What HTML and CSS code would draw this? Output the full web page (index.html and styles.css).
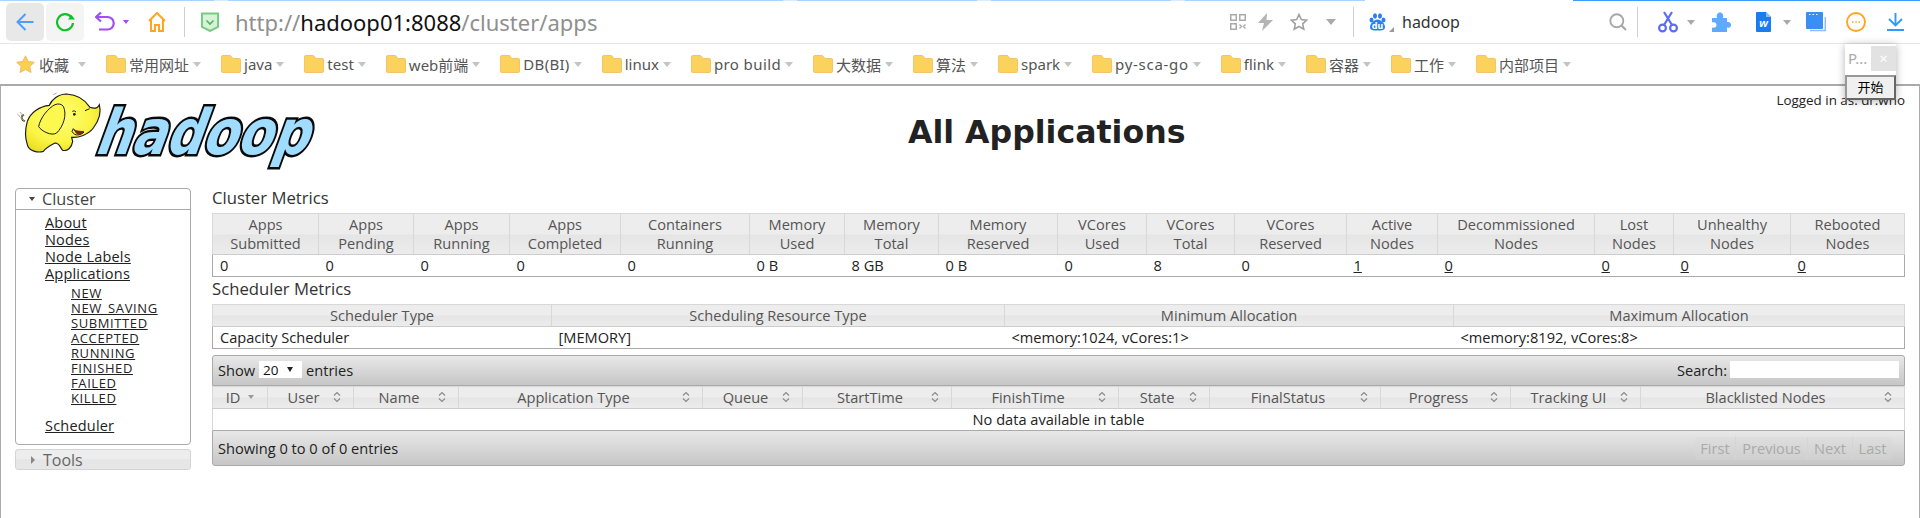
FILE: index.html
```html
<!DOCTYPE html>
<html lang="en">
<head>
<meta charset="utf-8">
<title>All Applications</title>
<link rel="stylesheet" href="styles.css">
</head>
<body>
<svg class="defs" width="0" height="0" aria-hidden="true">
  <symbol id="folder" viewBox="0 0 20 18"><path d="M.5 1.5Q.5.5 1.5.5H9.5L12 3.5H18.5Q19.5 3.5 19.5 4.5V16.5Q19.5 17.5 18.5 17.5H1.5Q.5 17.5.5 16.5Z" fill="#fbd35c" stroke="#f6c36a"/></symbol>
  <symbol id="sort" viewBox="0 0 8 12"><path d="M1 4.5 4 1.5 7 4.5M1 7.5 4 10.5 7 7.5" fill="none" stroke="#888" stroke-width="1.1"/></symbol>
</svg>
<div class="progress"></div>
<header class="toolbar">
  <button class="nav nav-back"><svg width="18" height="18" viewBox="0 0 18 18"><path d="M9.5 1 1.5 9l8 8M1.5 9H17.5" fill="none" stroke="#4a9eff" stroke-width="2"/></svg></button>
  <button class="nav nav-reload"><svg width="20" height="20" viewBox="0 0 20 20"><path d="M16.5 5.5A8 8 0 1 0 18 11" fill="none" stroke="#0cc224" stroke-width="2.2"/><path d="M13 7.5H20L16.5 3Z" fill="#0cc224"/></svg></button>
  <svg class="ic-undo" width="20" height="20" viewBox="0 0 20 20"><path d="M1 5H12.5A6.2 6.2 0 0 1 12.5 17.5H4" fill="none" stroke="#a24cf5" stroke-width="2.2"/><path d="M6 .5 1 5l5 4.5" fill="none" stroke="#a24cf5" stroke-width="2.2"/></svg>
  <i class="caret caret-purple"></i>
  <svg class="ic-home" width="18" height="20" viewBox="0 0 18 20"><path d="M1 9 9 1l8 8M3 7.5V19H7V13H11V19H15V7.5" fill="none" stroke="#ffa51f" stroke-width="2"/></svg>
  <span class="sep sep-a"></span>
  <svg class="ic-shield" width="18" height="20" viewBox="0 0 18 20"><path d="M1 1.5H17V15L9 19 1 15Z" fill="#d8f2d8" stroke="#76cc80" stroke-width="2"/><path d="M5.5 8.5 9 12l3.5-3.5" fill="none" stroke="#4db860" stroke-width="1.7"/></svg>
  <div class="url"><span class="dim">http://</span>hadoop01:8088<span class="dim">/cluster/apps</span></div>
  <svg class="ic-qr" width="16" height="16" viewBox="0 0 16 16"><path d="M.75.75h5.5v5.5H.75zM9.75.75h5.5v5.5h-5.5zM.75 9.75h5.5v5.5H.75z" fill="none" stroke="#aaa" stroke-width="1.5"/><path d="M9.5 9.5l2 2-2 2M15.5 9.5l-2 2 2 2" transform="translate(0 1)" fill="none" stroke="#aaa" stroke-width="1.4"/></svg>
  <svg class="ic-bolt" width="15" height="18" viewBox="0 0 15 18"><path d="M9 0 0 10H6L4 18 15 7H8.5Z" fill="#b4b4b4"/></svg>
  <svg class="ic-star" width="18" height="18" viewBox="0 0 18 18"><path d="M9 1.5l2.3 5 5.4.6-4 3.7 1.1 5.4L9 13.5l-4.8 2.7 1.1-5.4-4-3.7 5.4-.6Z" fill="none" stroke="#a0a0a0" stroke-width="1.6"/></svg>
  <i class="caret caret-big"></i>
  <span class="sep sep-b"></span>
  <svg class="ic-baidu" width="17" height="18" viewBox="0 0 17 18"><g fill="#2b7ff0"><ellipse cx="2.5" cy="7" rx="2" ry="2.6"/><ellipse cx="6" cy="3" rx="2" ry="2.7"/><ellipse cx="11" cy="3" rx="2" ry="2.7"/><ellipse cx="14.5" cy="7" rx="2" ry="2.6"/><path d="M8.5 6.5C12 6.5 16 11 16 14S13.5 17.5 8.5 17.5 1 17 1 14 5 6.5 8.5 6.5Z"/></g><text x="8.5" y="15.5" class="du">du</text></svg>
  <i class="corner"></i>
  <div class="engine">hadoop</div>
  <svg class="ic-search" width="18" height="18" viewBox="0 0 18 18"><circle cx="7.8" cy="7.8" r="6.5" fill="none" stroke="#a8a8a8" stroke-width="1.9"/><path d="M12.5 12.5 17 17" stroke="#a8a8a8" stroke-width="2.2"/></svg>
  <span class="sep sep-c"></span>
  <svg class="ic-cut" width="20" height="22" viewBox="0 0 20 22"><g fill="none" stroke="#5c6cf6" stroke-width="2.2"><circle cx="4.5" cy="17" r="3.4"/><circle cx="15.5" cy="17" r="3.4"/><path d="M6 14 14 1M14 14 6 1"/></g></svg>
  <i class="caret caret-tool"></i>
  <svg class="ic-puzzle" width="20" height="20" viewBox="0 0 20 20"><path d="M1 6H6C5 3 6.500.5 9 .5S13 3 12 6H16V10C19 9.500 20 11 20 13S19 16 16 15.500V20H1V15.500C4 16.500 5.500 15 5.500 13S4 9.500 1 10.500Z" fill="#5eaafc"/></svg>
  <svg class="ic-word" width="15" height="20" viewBox="0 0 15 20"><path d="M0 1Q0 0 1 0H10L15 5V19Q15 20 14 20H1Q0 20 0 19Z" fill="#1b7cf0"/><path d="M10 0 15 5H10Z" fill="#8cbff8"/><text x="7.500" y="15" class="wd">w</text></svg>
  <i class="caret caret-word"></i>
  <svg class="ic-note" width="20" height="20" viewBox="0 0 20 20"><path d="M4 18.500H19.300V5" fill="none" stroke="#8dbdf8" stroke-width="1.500"/><rect x="0" y="0" width="17" height="17" rx="1" fill="#3a8ff2"/><path d="M3 2.500h1.500M6.500 2.500H8M10 2.500h1.500" stroke="#fff"/></svg>
  <svg class="ic-more" width="20" height="20" viewBox="0 0 20 20"><circle cx="10" cy="10" r="9" fill="none" stroke="#ffa51f" stroke-width="1.900"/><path d="M6 10h1.500M9.300 10h1.500M12.500 10H14" stroke="#ffa51f" stroke-width="1.500"/></svg>
  <svg class="ic-down" width="17" height="18" viewBox="0 0 17 18"><path d="M8.500 0V12M2 6 8.500 12.500 15 6M0 17H17" fill="none" stroke="#2b9bff" stroke-width="1.900"/></svg>
</header>
<nav class="bookmarks">
  <div class="fav"><svg width="19" height="18" viewBox="0 0 19 18"><path d="M9.500.8l2.700 5.700 6.100.8-4.500 4.200 1.200 6-5.500-3-5.500 3 1.200-6L.7 7.300l6.100-.8Z" fill="#fad050" stroke="#f2b866"/></svg><span>收藏</span><i class="caret"></i></div>
  <div class="bm"><svg><use href="#folder"/></svg><span>常用网址</span><i class="caret"></i></div>
  <div class="bm"><svg><use href="#folder"/></svg><span>java</span><i class="caret"></i></div>
  <div class="bm"><svg><use href="#folder"/></svg><span>test</span><i class="caret"></i></div>
  <div class="bm"><svg><use href="#folder"/></svg><span>web前端</span><i class="caret"></i></div>
  <div class="bm"><svg><use href="#folder"/></svg><span class="track-s">DB(BI)</span><i class="caret"></i></div>
  <div class="bm"><svg><use href="#folder"/></svg><span>linux</span><i class="caret"></i></div>
  <div class="bm"><svg><use href="#folder"/></svg><span class="track-m">pro build</span><i class="caret"></i></div>
  <div class="bm"><svg><use href="#folder"/></svg><span>大数据</span><i class="caret"></i></div>
  <div class="bm"><svg><use href="#folder"/></svg><span>算法</span><i class="caret"></i></div>
  <div class="bm"><svg><use href="#folder"/></svg><span>spark</span><i class="caret"></i></div>
  <div class="bm"><svg><use href="#folder"/></svg><span class="track-l">py-sca-go</span><i class="caret"></i></div>
  <div class="bm"><svg><use href="#folder"/></svg><span>flink</span><i class="caret"></i></div>
  <div class="bm"><svg><use href="#folder"/></svg><span>容器</span><i class="caret"></i></div>
  <div class="bm"><svg><use href="#folder"/></svg><span>工作</span><i class="caret"></i></div>
  <div class="bm"><svg><use href="#folder"/></svg><span>内部项目</span><i class="caret"></i></div>
</nav>
<div class="popup">
  <div class="popup-head"><span class="popup-title">P...</span><span class="popup-close">×</span></div>
  <div class="popup-btn">开始</div>
</div>
<main class="page">
  <div class="page-head">
    <svg class="logo" width="310" height="80" viewBox="0 0 930 240">
      <defs><radialGradient id="ele" cx=".45" cy=".4" r=".7"><stop offset="0" stop-color="#ffff80"/><stop offset=".6" stop-color="#fbf545"/><stop offset="1" stop-color="#e6da1e"/></radialGradient></defs>
      <text class="logo-text" x="0" y="0" textLength="640" lengthAdjust="spacingAndGlyphs" transform="translate(250 198) skewX(-20)">hadoop</text>
      <path d="M45 100C34 96 30 85 42 80" fill="none" stroke="#222" stroke-width="5"/>
      <path d="M45 100C34 96 30 85 42 80" fill="none" stroke="#fbf545" stroke-width="2"/>
      <path d="M22 78l8 8M30 72l6 8M130 20l10-5" stroke="#777" stroke-width="2"/>
      <path d="M268 50C262 62 250 62 240 58 225 35 205 20 170 18 145 18 125 35 118 52 90 55 62 72 52 100 45 125 45 150 52 170 56 190 85 195 100 190 108 180 125 170 135 165 150 165 150 180 158 187 172 190 185 180 188 160L185 148C205 150 235 140 250 120 265 100 275 75 268 50Z" fill="url(#ele)" stroke="#1a1a1a" stroke-width="3.500"/>
      <path d="M135 50C115 60 90 90 86 116 95 130 125 145 140 135 160 115 172 80 160 55 155 48 145 46 135 50Z" fill="#fcf850" stroke="#1a1a1a" stroke-width="3"/>
      <path d="M187 70q6-4 11 2M225 68l14-6M190 122C198 132 205 146 222 132 214 140 195 148 186 130Z" fill="none" stroke="#1a1a1a" stroke-width="3"/>
      <circle cx="193" cy="79" r="4" fill="#1a1a1a"/>
      <path d="M192 124C200 128 212 130 222 128 216 142 198 148 192 124Z" fill="#7a2a10"/>
    </svg>
    <h1 class="title">All Applications</h1>
    <div class="login">Logged in as: dr.who</div>
  </div>
  <div class="columns">
    <aside class="side">
      <section class="panel">
        <h3 class="panel-head"><i class="tri-down"></i>Cluster</h3>
        <div class="panel-body">
          <a href="#">About</a>
          <a href="#">Nodes</a>
          <a href="#">Node Labels</a>
          <a href="#">Applications</a>
          <div class="sub">
            <a href="#">NEW</a>
            <a href="#">NEW_SAVING</a>
            <a href="#">SUBMITTED</a>
            <a href="#">ACCEPTED</a>
            <a href="#">RUNNING</a>
            <a href="#">FINISHED</a>
            <a href="#">FAILED</a>
            <a href="#">KILLED</a>
          </div>
          <a href="#">Scheduler</a>
        </div>
      </section>
      <h3 class="panel-closed"><i class="tri-right"></i>Tools</h3>
    </aside>
    <div class="content">
      <h3 class="sec-title">Cluster Metrics</h3>
      <table class="grid metrics">
        <colgroup><col class="m1"><col class="m2"><col class="m3"><col class="m4"><col class="m5"><col class="m6"><col class="m7"><col class="m8"><col class="m9"><col class="m10"><col class="m11"><col class="m12"><col class="m13"><col class="m14"><col class="m15"><col class="m16"></colgroup>
        <thead><tr>
          <th>Apps<br>Submitted</th><th>Apps<br>Pending</th><th>Apps<br>Running</th><th>Apps<br>Completed</th><th>Containers<br>Running</th><th>Memory<br>Used</th><th>Memory<br>Total</th><th>Memory<br>Reserved</th><th>VCores<br>Used</th><th>VCores<br>Total</th><th>VCores<br>Reserved</th><th>Active<br>Nodes</th><th>Decommissioned<br>Nodes</th><th>Lost<br>Nodes</th><th>Unhealthy<br>Nodes</th><th>Rebooted<br>Nodes</th>
        </tr></thead>
        <tbody><tr>
          <td>0</td><td>0</td><td>0</td><td>0</td><td>0</td><td>0 B</td><td>8 GB</td><td>0 B</td><td>0</td><td>8</td><td>0</td><td><a href="#">1</a></td><td><a href="#">0</a></td><td><a href="#">0</a></td><td><a href="#">0</a></td><td><a href="#">0</a></td>
        </tr></tbody>
      </table>
      <h3 class="sec-title sec-title-2">Scheduler Metrics</h3>
      <table class="grid sched">
        <colgroup><col class="s1"><col class="s2"><col class="s3"><col class="s4"></colgroup>
        <thead><tr><th>Scheduler Type</th><th>Scheduling Resource Type</th><th>Minimum Allocation</th><th>Maximum Allocation</th></tr></thead>
        <tbody><tr><td>Capacity Scheduler</td><td>[MEMORY]</td><td>&lt;memory:1024, vCores:1&gt;</td><td>&lt;memory:8192, vCores:8&gt;</td></tr></tbody>
      </table>
      <div class="dt-top">
        <div class="dt-length">Show <span class="select">20<i class="sel-tri"></i></span> entries</div>
        <label class="dt-search">Search: <input class="search-box" type="text"></label>
      </div>
      <table class="grid apps">
        <colgroup><col class="a1"><col class="a2"><col class="a3"><col class="a4"><col class="a5"><col class="a6"><col class="a7"><col class="a8"><col class="a9"><col class="a10"><col class="a11"><col class="a12"></colgroup>
        <thead><tr>
          <th>ID<i class="sort-down"></i></th>
          <th>User<svg class="sort"><use href="#sort"/></svg></th>
          <th>Name<svg class="sort"><use href="#sort"/></svg></th>
          <th>Application Type<svg class="sort"><use href="#sort"/></svg></th>
          <th>Queue<svg class="sort"><use href="#sort"/></svg></th>
          <th>StartTime<svg class="sort"><use href="#sort"/></svg></th>
          <th>FinishTime<svg class="sort"><use href="#sort"/></svg></th>
          <th>State<svg class="sort"><use href="#sort"/></svg></th>
          <th>FinalStatus<svg class="sort"><use href="#sort"/></svg></th>
          <th>Progress<svg class="sort"><use href="#sort"/></svg></th>
          <th>Tracking UI<svg class="sort"><use href="#sort"/></svg></th>
          <th>Blacklisted Nodes<svg class="sort"><use href="#sort"/></svg></th>
        </tr></thead>
        <tbody><tr><td colspan="12" class="empty">No data available in table</td></tr></tbody>
      </table>
      <div class="dt-bottom">
        <div class="dt-info">Showing 0 to 0 of 0 entries</div>
        <div class="pager"><span class="pg pg1">First</span><span class="pg pg2">Previous</span><span class="pg pg3">Next</span><span class="pg pg4">Last</span></div>
      </div>
    </div>
  </div>
</main>
</body>
</html>
```
FILE: styles.css
```css
* { box-sizing: border-box; }
html, body { margin: 0; height: 518px; overflow: hidden; background: #fff; }
body { font-family: "Open Sans", sans-serif; font-size: 14.6px; color: #222; position: relative; }
.defs { position: absolute; }
i { display: block; font-style: normal; }

.progress {
  height: 1px;
  background: linear-gradient(90deg, #a8d4ff 0 214px, #d8ebff 214px 228px, #a8d4ff 228px 783px, #d8ebff 783px 797px, #a8d4ff 797px 977px, #d8ebff 977px 991px, #a8d4ff 991px 1171px, #d8ebff 1171px 1185px, #a8d4ff 1185px 1365px, #fff 1365px 1573px, #3a9cff 1573px);
}
.toolbar {
  height: 43px;
  display: flex;
  align-items: center;
  border-bottom: 1px solid #e6e6e6;
  padding-left: 6px;
  font-family: "Noto Sans", "Noto Sans CJK SC", sans-serif;
}
.toolbar svg { flex: none; }
.nav { width: 38px; height: 38px; border: 0; border-radius: 5px; padding: 0; display: flex; align-items: center; justify-content: center; }
.nav-back { background: #e8e8e8; }
.nav-reload { background: #f4f4f4; margin-left: 2px; }
.ic-undo { margin-left: 11px; }
.caret { width: 0; height: 0; border-style: solid; border-width: 5px 4px 0; border-color: #c4c4c4 transparent transparent; flex: none; }
.caret-purple { border-width: 4px 3.5px 0; border-top-color: #a24cf5; margin-left: 8px; }
.ic-home { margin-left: 19px; }
.sep { width: 1px; height: 30px; background: #cfcfcf; flex: none; }
.sep-a { margin-left: 18px; }
.ic-shield { margin-left: 16px; }
.url { margin-left: 16px; font-size: 22px; color: #111; white-space: nowrap; }
.dim { color: #8f8f8f; }
.ic-qr { margin-left: auto; }
.ic-bolt { margin-left: 12px; }
.ic-star { margin-left: 17px; }
.caret-big { border-width: 6px 5px 0; border-top-color: #aaa; margin-left: 18px; }
.sep-b { margin-left: 17px; }
.ic-baidu { margin-left: 15px; }
.du { font: bold 8px "DejaVu Sans", sans-serif; fill: #fff; text-anchor: middle; }
.corner { width: 0; height: 0; border-style: solid; border-width: 0 0 5px 5px; border-color: transparent transparent #999; margin: 14px 0 0 3px; }
.engine { margin-left: 8px; font-size: 16px; color: #333; width: 207px; }
.sep-c { margin-left: 10px; }
.ic-cut { margin-left: 20px; }
.caret-tool { margin-left: 9px; border-top-color: #aaa; }
.ic-puzzle { margin-left: 16px; }
.ic-word { margin-left: 25px; }
.caret-word { margin-left: 12px; border-top-color: #aaa; }
.ic-note { margin-left: 15px; }
.ic-more { margin-left: 20px; }
.ic-down { margin-left: 21px; margin-right: 16px; }
.wd { font: italic bold 11px "Liberation Sans", sans-serif; fill: #fff; text-anchor: middle; }

.bookmarks {
  height: 40px;
  display: flex;
  align-items: center;
  padding-left: 16px;
  gap: 20px;
  font-family: "Noto Sans", "Noto Sans CJK SC", sans-serif;
  font-size: 15px;
  color: #555;
  white-space: nowrap;
}
.bm, .fav { display: flex; align-items: center; }
.bm svg { width: 20px; height: 18px; margin-right: 3px; }
.bm .caret { margin-left: 4px; }
.track-s { letter-spacing: .3px; }
.track-m { letter-spacing: .4px; }
.track-l { letter-spacing: .7px; }
.fav span { margin-left: 4px; }
.fav .caret { margin-left: 9px; }

.page {
  height: 434px;
  border: 1px solid #aaa;
  border-top-width: 2px;
  border-bottom: 0;
}
.page-head { height: 102px; display: flex; align-items: flex-start; position: relative; }
.logo { margin: 2px 0 0 9px; flex: none; overflow: visible; }
.logo-text { font: bold 188px "DejaVu Sans", sans-serif; fill: #9fdcff; stroke: #0a0a0a; stroke-width: 15px; paint-order: stroke; stroke-linejoin: miter; }
.title { margin: 26px 0 0 588px; font-size: 31.600px; line-height: 40px; font-weight: bold; font-family: "DejaVu Sans", sans-serif; color: #222; white-space: nowrap; }
.login { position: absolute; right: 14px; top: 6px; font-size: 13.400px; line-height: 16px; color: #222; }

.columns { display: flex; align-items: flex-start; padding-left: 14px; }
.side { width: 176px; flex: none; margin-right: 21px; }
.panel { border: 1px solid #aaa; border-radius: 4px; height: 257px; }
.panel-head { margin: 0; height: 21px; border-bottom: 1px solid #aaa; display: flex; align-items: center; font-size: 16.300px; font-weight: normal; color: #444; padding-left: 13px; }
.tri-down { width: 0; height: 0; border-style: solid; border-width: 4px 3.500px 0; border-color: #444 transparent transparent; margin-right: 7px; }
.tri-right { width: 0; height: 0; border-style: solid; border-width: 4px 0 4px 4px; border-color: transparent transparent transparent #888; margin-right: 8px; margin-left: 2px; }
.panel-body { padding: 4px 0 0 29px; }
.panel-body a { display: block; color: #222; font-size: 14.500px; letter-spacing: .2px; line-height: 17px; }
.sub { padding: 4px 0 11px 26px; }
.panel-body .sub a { font-size: 13px; letter-spacing: .6px; line-height: 15px; }
.panel-closed { margin: 4px 0 0; height: 21px; border: 1px solid #d4d4d4; border-radius: 3px; background: linear-gradient(#ededed 50%, #e6e6e6 50%); display: flex; align-items: center; font-size: 16px; font-weight: normal; color: #666; padding-left: 13px; }

.content { width: 1693px; flex: none; }
.sec-title { margin: 0; height: 25px; line-height: 20px; font-size: 16.700px; font-weight: normal; color: #333; }
.sec-title-2 { height: 27px; line-height: 24px; }
.grid { width: 1692px; table-layout: fixed; border-collapse: collapse; border: 1px solid #aaa; border-top-color: #d8d8d8; }
.grid th { background: linear-gradient(#ededed 50%, #e5e5e5 50%, #ececec); border: 1px solid #d8d8d8; border-top: 0; border-bottom: 1px solid #ccc; color: #555; font-weight: normal; line-height: 19px; padding: 1px 0; position: relative; text-align: center; }
.grid td { padding: 0 0 0 7px; height: 22px; line-height: 21px; color: #222; }
.grid td a { color: #222; }
.grid .empty { text-align: center; padding: 0; }
.metrics th { height: 41px; }
.sched th, .apps th { height: 22px; }
.apps { border-bottom: 0; border-left-color: #d8d8d8; border-right-color: #d8d8d8; }
.apps th { padding-right: 14px; }
.apps td { height: 21px; }
.sort { position: absolute; right: 12px; top: 4px; width: 8px; height: 12px; }
.sort-down { position: absolute; right: 13px; top: 8px; width: 0; height: 0; border-style: solid; border-width: 4px 3.500px 0; border-color: #999 transparent transparent; }

.m1 { width: 106px; } .m2 { width: 95px; } .m3 { width: 96px; } .m4 { width: 111px; }
.m5 { width: 129px; } .m6 { width: 95px; } .m7 { width: 94px; } .m8 { width: 119px; }
.m9 { width: 89px; } .m10 { width: 88px; } .m11 { width: 112px; } .m12 { width: 91px; }
.m13 { width: 157px; } .m14 { width: 79px; } .m15 { width: 117px; } .m16 { width: 114px; }
.s1 { width: 339px; } .s2 { width: 453px; } .s3 { width: 449px; } .s4 { width: 451px; }
.a1 { width: 55px; } .a2 { width: 86px; } .a3 { width: 105px; } .a4 { width: 244px; }
.a5 { width: 100px; } .a6 { width: 149px; } .a7 { width: 167px; } .a8 { width: 91px; }
.a9 { width: 171px; } .a10 { width: 130px; } .a11 { width: 130px; } .a12 { width: 264px; }

.dt-top, .dt-bottom { display: flex; align-items: center; justify-content: space-between; border: 1px solid #aaa; background: linear-gradient(#e8e8e8, #c6c6c6); padding: 0 5px; }
.dt-top { height: 31px; margin-top: 6px; border-radius: 3px 3px 0 0; padding-bottom: 2px; }
.dt-bottom { height: 36px; border-radius: 0 0 3px 3px; }
.dt-length, .dt-search, .dt-info { color: #222; display: flex; align-items: center; }
.select { width: 43px; height: 17px; background: #fff; margin: 0 4px; padding-left: 4px; display: flex; align-items: center; justify-content: space-between; padding-right: 9px; font-size: 13.500px; color: #111; }
.sel-tri { width: 0; height: 0; border-style: solid; border-width: 5px 3.500px 0; border-color: #222 transparent transparent; }
.search-box { width: 169px; height: 17px; border: 0; background: #fff; margin-left: 3px; padding: 0; }
.pager { display: flex; height: 23px; margin-right: 7px; border-radius: 3px; background: linear-gradient(#dedede, #cfcfcf); }
.pg { display: flex; align-items: center; justify-content: center; color: #aaa; border-right: 1px solid #d4d4d4; }
.pg1 { width: 41px; } .pg2 { width: 72px; } .pg3 { width: 45px; } .pg4 { width: 39px; border-right: 0; }

.popup { position: absolute; left: 1845px; top: 44px; width: 51px; box-shadow: 0 1px 8px rgba(0,0,0,.3); z-index: 2; font-family: "Noto Sans", "Noto Sans CJK SC", sans-serif; }
.popup-head { height: 31px; background: #fff; display: flex; align-items: flex-start; padding: 2px 0 0 3px; }
.popup-title { color: #aaa; font-size: 15px; line-height: 25px; width: 23px; }
.popup-close { width: 25px; height: 25px; background: #e2e2e2; color: #fff; text-align: center; line-height: 25px; font-size: 15px; }
.popup-btn { height: 25px; background: #f0f0f0; border: 2px solid #666; border-top-color: #999; border-left-color: #999; color: #000; text-align: center; font-size: 13px; line-height: 21px; }
```
